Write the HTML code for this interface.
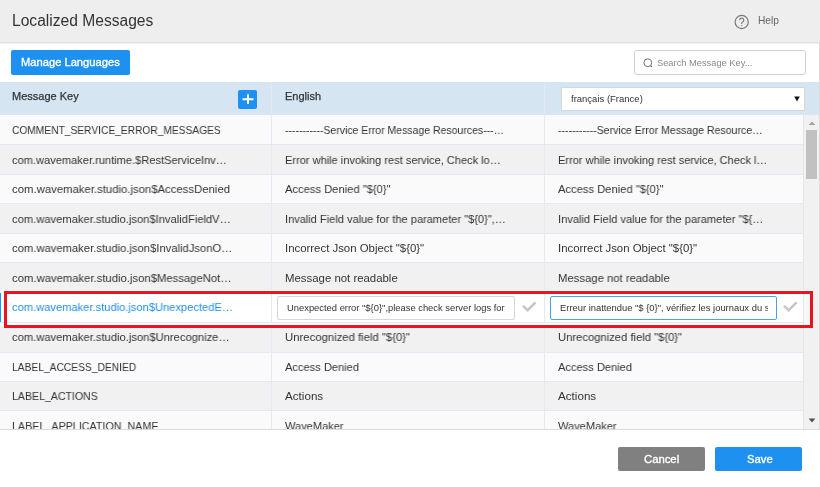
<!DOCTYPE html>
<html><head><meta charset="utf-8">
<style>
*{box-sizing:border-box;margin:0;padding:0}
html,body{width:820px;height:487px;overflow:hidden;background:#fff;font-family:"Liberation Sans",sans-serif;color:#333}
.a{position:absolute}
.t{position:absolute;white-space:nowrap;line-height:1}
#title{left:0;top:0;width:820px;height:43px;background:#eeeeee;border-bottom:1px solid #e0e0e0;box-shadow:0 1px 0 #f1f1f1}
#ttl{left:12px;top:13px;font-size:15.6px;color:#333}
#help{left:758px;top:16px;font-size:10.2px;color:#666}
#btnml{left:11px;top:50px;width:119px;height:25px;background:#1e90f0;border-radius:2px}
#btnml span{left:10px;top:0;line-height:25px;font-size:11px;font-weight:normal;-webkit-text-stroke:0.35px #fff;color:#fff;transform-origin:0 50%;transform:scaleX(1.015)}
#search{left:634px;top:50px;width:172px;height:25px;border:1px solid #cfcfcf;border-radius:3px;background:#fff}
#search span{left:22px;top:8px;font-size:9.3px;color:#8a8a8a}
#thead{left:0;top:82px;width:819px;height:33px;background:#d5e5f1}
.hd{font-size:11px;color:#333;-webkit-text-stroke:0.25px #333}
#plus{left:238px;top:90px;width:19px;height:19px;background:#1e90f0;border-radius:2px}
#sel{left:561px;top:87px;width:244px;height:24px;background:#fff;border:1px solid #d3d8dc}
#sel span{left:9px;top:6px;font-size:9.5px;color:#333}
.row{position:absolute;left:0;width:803px;border-bottom:1px solid #e3e9ee}
.odd{background:#fafafa}
.even{background:#f1f1f1}
.sel{background:#fff}
.c{position:absolute;top:0;line-height:30px;font-size:11.4px;color:#333;white-space:nowrap;transform-origin:0 50%;will-change:transform}
.vl{position:absolute;top:82px;width:1px;height:347px;background:#e3e9ee}
#scroll{left:803px;top:115px;width:16px;height:314px;background:#f1f1f1;border-left:1px solid #e6e6e6}
#thumb{left:806px;top:130px;width:11px;height:49px;background:#c1c1c1}
#tbot{left:0;top:429px;width:820px;height:1px;background:#dcdcdc}
#rline{left:819px;top:43px;width:1px;height:387px;background:#dadada}
.btn{position:absolute;top:447px;height:24px;border-radius:2px;color:#fff;font-weight:bold;font-size:11.3px;text-align:center;line-height:24px}
.btn span{display:inline-block;font-weight:normal;-webkit-text-stroke:0.35px #fff}
#cancel{left:618px;width:87px;background:#808080}
#save{left:715px;width:87px;background:#1e90f0;padding-left:2px}
#redbox{left:4px;top:291px;width:809px;height:37px;border:3px solid #e8141f}
.inp{position:absolute;top:296px;height:24px;background:#fff;border:1px solid #d6d6d6;border-radius:2px;overflow:hidden}
.inp .clip{position:absolute;left:9px;top:0;height:22px;overflow:hidden}
.inp span{position:absolute;left:0;top:4.5px;font-size:9.4px;color:#333;white-space:nowrap}
.t,span,.btn{will-change:transform}

</style></head><body>
<div id="title" class="a"></div>
<div id="ttl" class="t">Localized Messages</div>
<svg class="a" style="left:734px;top:14px" width="16" height="16" viewBox="0 0 16 16">
<circle cx="7.7" cy="8" r="6.6" fill="none" stroke="#7a7a7a" stroke-width="1.2"/>
<path d="M5.6 6.2a2.1 2.1 0 1 1 3 1.9c-.6.3-.9.7-.9 1.4v.6" fill="none" stroke="#7a7a7a" stroke-width="1.1"/>
<circle cx="7.7" cy="11.6" r=".7" fill="#7a7a7a"/>
</svg>
<div id="help" class="t">Help</div>

<div id="btnml" class="a"><span class="t">Manage Languages</span></div>
<div id="search" class="a">
<svg class="a" style="left:8px;top:7.3px" width="10" height="10" viewBox="0 0 10 10"><circle cx="4.8" cy="4.7" r="3.9" fill="none" stroke="#707070" stroke-width="1"/><path d="M7.6 7.6L9 9" stroke="#707070" stroke-width="1.1"/></svg>
<span class="t">Search Message Key...</span></div>

<div id="thead" class="a"></div>
<div class="t hd" style="left:12px;top:91px">Message Key</div>
<div id="plus" class="a"><svg width="19" height="19" viewBox="0 0 19 19" style="display:block"><path d="M10 4.2v9.8M4.5 9.2h11" stroke="#fff" stroke-width="2"/></svg></div>
<div class="t hd" style="left:285px;top:91px">English</div>
<div id="sel" class="a"><span class="t">français (France)</span>
<svg class="a" style="left:232px;top:8px" width="6" height="6" viewBox="0 0 6 6"><path d="M0.2 0.5h5.6L3 5.6z" fill="#111"/></svg></div>

<div id="rows">
<div class="row odd" style="top:115px;height:30px"></div>
<div class="row even" style="top:145px;height:30px"></div>
<div class="row odd" style="top:175px;height:29px"></div>
<div class="row even" style="top:204px;height:30px"></div>
<div class="row odd" style="top:234px;height:29px"></div>
<div class="row even" style="top:263px;height:30px"></div>
<div class="row sel" style="top:293px;height:30px"></div>
<div class="row even" style="top:323px;height:30px"></div>
<div class="row odd" style="top:353px;height:29px"></div>
<div class="row even" style="top:382px;height:29px"></div>
<div class="row odd" style="top:411px;height:19px;border-bottom:0"></div>
<span class="c" id="r0c0" style="left:12px;top:115px;transform:scaleX(0.8970)">COMMENT_SERVICE_ERROR_MESSAGES</span>
<span class="c" id="r0c1" style="left:285px;top:115px;transform:scaleX(0.9207)">-----------Service Error Message Resources---…</span>
<span class="c" id="r0c2" style="left:558px;top:115px;transform:scaleX(0.9264)">-----------Service Error Message Resource…</span>
<span class="c" id="r1c0" style="left:12px;top:145px;transform:scaleX(0.9727)">com.wavemaker.runtime.$RestServiceInv…</span>
<span class="c" id="r1c1" style="left:285px;top:145px;transform:scaleX(0.9685)">Error while invoking rest service, Check lo…</span>
<span class="c" id="r1c2" style="left:558px;top:145px;transform:scaleX(0.9675)">Error while invoking rest service, Check l…</span>
<span class="c" id="r2c0" style="left:12px;top:174px;transform:scaleX(0.9954)">com.wavemaker.studio.json$AccessDenied</span>
<span class="c" id="r2c1" style="left:285px;top:174px;transform:scaleX(0.9816)">Access Denied &quot;${0}&quot;</span>
<span class="c" id="r2c2" style="left:558px;top:174px;transform:scaleX(0.9816)">Access Denied &quot;${0}&quot;</span>
<span class="c" id="r3c0" style="left:12px;top:204px;transform:scaleX(0.9820)">com.wavemaker.studio.json$InvalidFieldV…</span>
<span class="c" id="r3c1" style="left:285px;top:204px;transform:scaleX(0.9690)">Invalid Field value for the parameter &quot;${0}&quot;,…</span>
<span class="c" id="r3c2" style="left:558px;top:204px;transform:scaleX(0.9760)">Invalid Field value for the parameter &quot;${…</span>
<span class="c" id="r4c0" style="left:12px;top:233px;transform:scaleX(0.9865)">com.wavemaker.studio.json$InvalidJsonO…</span>
<span class="c" id="r4c1" style="left:285px;top:233px;transform:scaleX(1.0000)">Incorrect Json Object &quot;${0}&quot;</span>
<span class="c" id="r4c2" style="left:558px;top:233px;transform:scaleX(1.0000)">Incorrect Json Object &quot;${0}&quot;</span>
<span class="c" id="r5c0" style="left:12px;top:263px;transform:scaleX(0.9910)">com.wavemaker.studio.json$MessageNot…</span>
<span class="c" id="r5c1" style="left:285px;top:263px;transform:scaleX(1.0002)">Message not readable</span>
<span class="c" id="r5c2" style="left:558px;top:263px;transform:scaleX(0.9912)">Message not readable</span>
<span class="c" id="r7c0" style="left:12px;top:322px;transform:scaleX(0.9819)">com.wavemaker.studio.json$Unrecognize…</span>
<span class="c" id="r7c1" style="left:285px;top:322px;transform:scaleX(0.9938)">Unrecognized field &quot;${0}&quot;</span>
<span class="c" id="r7c2" style="left:558px;top:322px;transform:scaleX(0.9857)">Unrecognized field &quot;${0}&quot;</span>
<span class="c" id="r8c0" style="left:12px;top:352px;transform:scaleX(0.9001)">LABEL_ACCESS_DENIED</span>
<span class="c" id="r8c1" style="left:285px;top:352px;transform:scaleX(0.9738)">Access Denied</span>
<span class="c" id="r8c2" style="left:558px;top:352px;transform:scaleX(0.9737)">Access Denied</span>
<span class="c" id="r9c0" style="left:12px;top:381px;transform:scaleX(0.9285)">LABEL_ACTIONS</span>
<span class="c" id="r9c1" style="left:285px;top:381px;transform:scaleX(1.0219)">Actions</span>
<span class="c" id="r9c2" style="left:558px;top:381px;transform:scaleX(1.0219)">Actions</span>
<span class="c" id="r10c0" style="left:12px;top:411px;transform:scaleX(0.9420)">LABEL_APPLICATION_NAME</span>
<span class="c" id="r10c1" style="left:285px;top:411px;transform:scaleX(0.9706)">WaveMaker</span>
<span class="c" id="r10c2" style="left:558px;top:411px;transform:scaleX(0.9706)">WaveMaker</span>
</div>
<div class="vl" style="left:271px"></div>
<div class="vl" style="left:544px"></div>
<div id="scroll" class="a"></div>
<div id="thumb" class="a"></div>
<svg class="a" style="left:808px;top:121px" width="8" height="5" viewBox="0 0 8 5"><path d="M0.6 4h6.8L4 0.6z" fill="#a3a3a3"/></svg>
<svg class="a" style="left:808px;top:418px" width="8" height="5" viewBox="0 0 8 5"><path d="M0.6 0.6h6.8L4 4.4z" fill="#505050"/></svg>

<div class="a" style="left:1px;top:290px;width:812px;height:36px;background:#fff"></div>
<div class="a" style="left:803px;top:294px;width:7px;height:31px;background:#f7f7f7;border-left:1px solid #e6e6e6"></div>
<div class="a" style="left:0;top:293px;width:803px;height:30px;border-bottom:1px solid #e3e9ee"></div>
<div class="a" style="left:271px;top:293px;width:1px;height:29px;background:#e3e9ee"></div>
<div class="a" style="left:544px;top:293px;width:1px;height:29px;background:#e3e9ee"></div>
<span class="c" style="left:12px;top:292px;transform:scaleX(0.9778);color:#1e8fec">com.wavemaker.studio.json$UnexpectedE…</span>
<div class="inp" style="left:277px;width:238px"><div class="clip" style="width:220px"><span>Unexpected error "${0}",please check server logs for more details</span></div></div>
<svg class="a" style="left:522px;top:301px" width="15" height="11" viewBox="0 0 15 11"><path d="M1 4.8L5.6 9.2L13.6 1.4" fill="none" stroke="#c6c6c6" stroke-width="2.5"/></svg>
<div class="inp" style="left:550px;width:227px;border-color:#4aa3ea"><div class="clip" style="width:208px"><span>Erreur inattendue "$ {0}", vérifiez les journaux du serveur pour plus de détails</span></div></div>
<svg class="a" style="left:783px;top:301px" width="15" height="11" viewBox="0 0 15 11"><path d="M1 4.8L5.6 9.2L13.6 1.4" fill="none" stroke="#c6c6c6" stroke-width="2.5"/></svg>
<div class="a" style="left:0;top:293px;width:1px;height:29px;background:#2196f3"></div>
<div id="redbox" class="a"></div>

<div class="a" style="left:0;top:430px;width:820px;height:57px;background:#fff"></div>
<div id="tbot" class="a"></div>
<div id="rline" class="a"></div>
<div id="cancel" class="btn"><span>Cancel</span></div>
<div id="save" class="btn"><span>Save</span></div>

</body></html>
